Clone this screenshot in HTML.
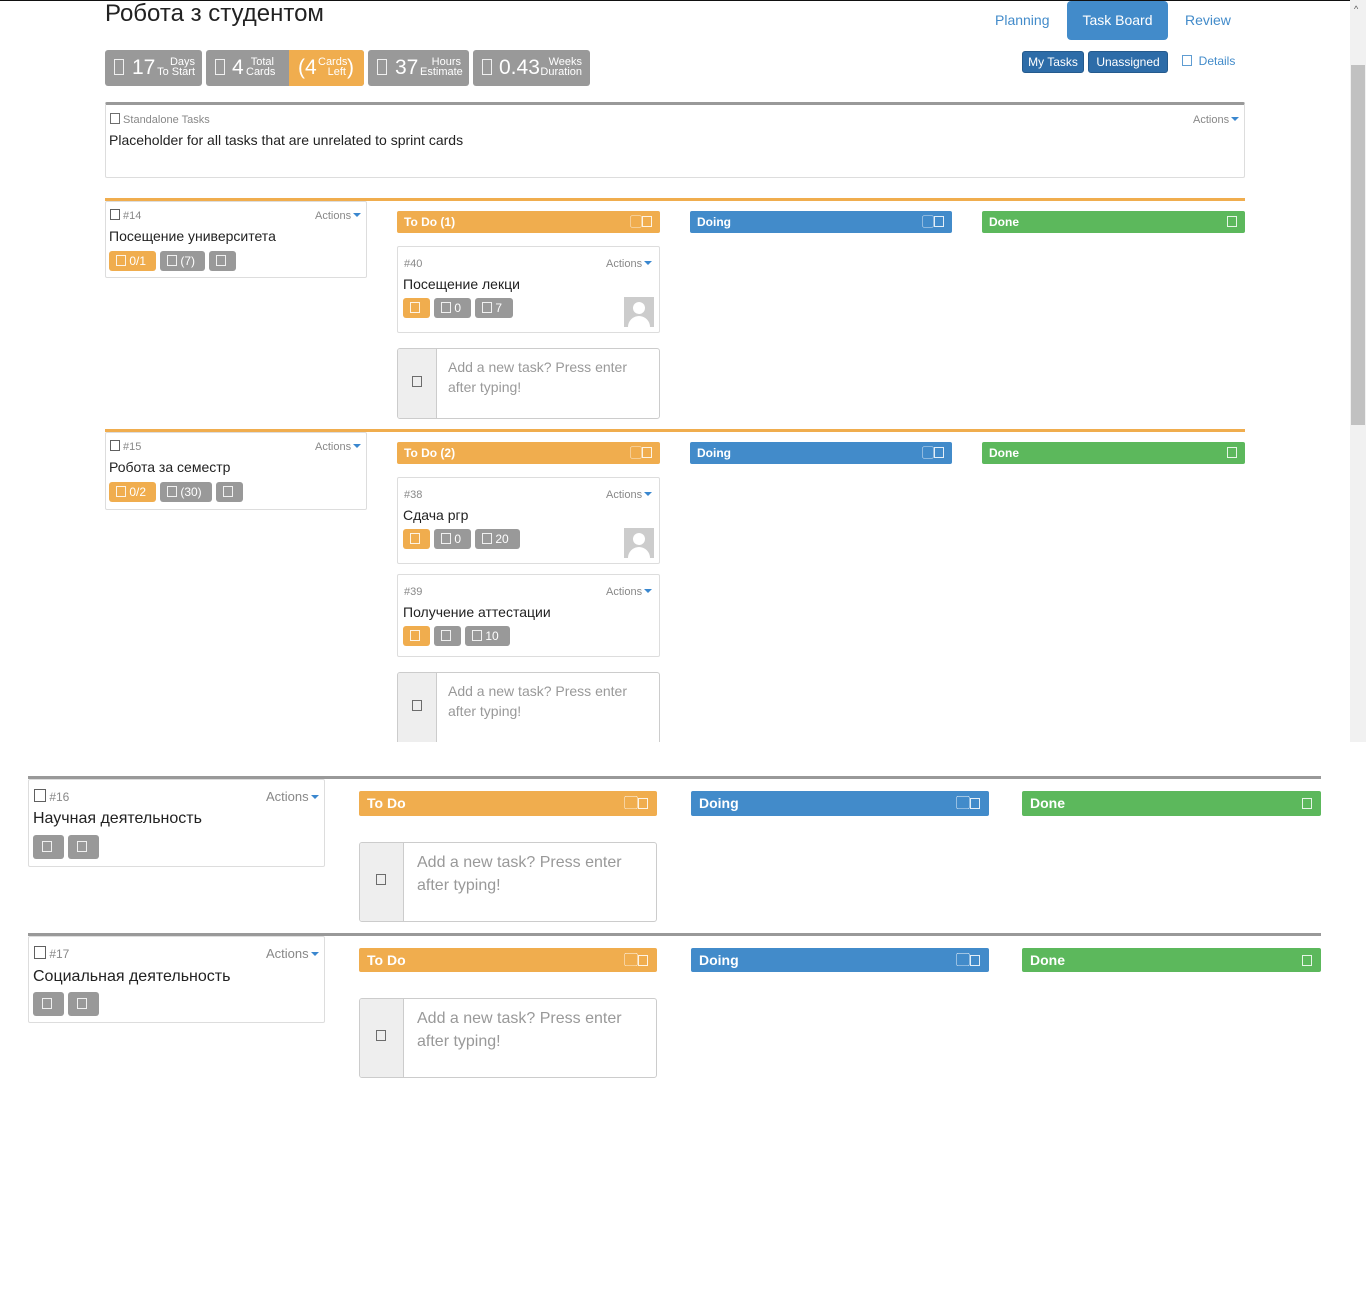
<!DOCTYPE html>
<html><head><meta charset="utf-8"><style>
*{box-sizing:border-box;margin:0;padding:0}
body{width:1366px;height:1289px;background:#fff;font-family:"Liberation Sans","Noto Sans CJK SC",sans-serif;color:#222;position:relative;overflow:hidden}
.a{position:absolute}
.ic{display:inline-block;width:10px;height:11px;border:1px solid currentColor;vertical-align:-1px;opacity:.85}
.stat{position:absolute;top:50px;height:36px;background:#999;color:#fff;border-radius:3px}
.big{position:absolute;top:6px;font-size:21px}
.sm{position:absolute;font-size:11px;line-height:10px;text-align:right}
.box{position:absolute;border:1px solid #ddd;background:#fff;border-radius:2px}
.hdr{position:absolute;color:#fff;font-weight:bold;border-radius:2px;font-size:12px;padding-left:7px}
.bdg{position:absolute;height:20px;border-radius:3px;color:#fff;font-size:12px;line-height:20px;padding-left:7px}
.o{background:#f0ad4e}.g{background:#999}
.act{position:absolute;color:#888;font-size:11px}
.act:after{content:"";display:inline-block;border:4px solid transparent;border-top:4px solid #3a87cf;border-bottom:0;margin-left:2px;vertical-align:2px}
.gray{color:#888;font-size:11px}
.add{position:absolute;border:1px solid #ccc;border-radius:3px;background:#fff;overflow:hidden}
.add .l{position:absolute;left:0;top:0;bottom:0;background:#eee;border-right:1px solid #ccc}
.add .t{position:absolute;color:#999}
.av{position:absolute;width:30px;height:30px;background:#ccc;overflow:hidden}
.av:before{content:"";position:absolute;left:9px;top:5px;width:12px;height:12px;border-radius:50%;background:#fff}
.av:after{content:"";position:absolute;left:4px;top:19px;width:22px;height:16px;border-radius:11px 11px 0 0;background:#fff}
</style></head><body>
<div class="a" style="left:0;top:0;width:1350px;height:1px;background:#111"></div>
<div class="a" style="left:105px;top:0;font-size:24px;color:#222">Робота з студентом</div>

<div class="stat" style="left:105px;width:97px"><span class="ic a" style="left:9px;top:9px;height:16px"></span><span class="big" style="left:27px">17</span><span class="sm" style="left:52px;top:7px;width:38px">Days<br>To Start</span></div>
<div class="stat" style="left:206px;width:158px;background:#999"><span class="ic a" style="left:9px;top:9px;height:16px"></span><span class="big" style="left:26px">4</span><span class="sm" style="left:40px;top:7px;width:28px">Total<br>Cards</span>
<div class="a" style="left:83px;top:0;width:75px;height:36px;background:#f0ad4e;border-radius:0 3px 3px 0"><span class="big" style="left:9px;top:6px">(4</span><span class="sm" style="left:29px;top:7px;width:28px">Cards<br>Left</span><span class="big" style="left:58px">)</span></div></div>
<div class="stat" style="left:368px;width:101px"><span class="ic a" style="left:9px;top:9px;height:16px"></span><span class="big" style="left:27px">37</span><span class="sm" style="left:52px;top:7px;width:41px">Hours<br>Estimate</span></div>
<div class="stat" style="left:473px;width:117px"><span class="ic a" style="left:9px;top:9px;height:16px"></span><span class="big" style="left:26px">0.43</span><span class="sm" style="left:67px;top:7px;width:42px">Weeks<br>Duration</span></div>

<div class="a" style="left:995px;top:12px;color:#428bca;font-size:14px">Planning</div>
<div class="a" style="left:1067px;top:1px;width:101px;height:39px;background:#428bca;border-radius:4px;color:#fff;font-size:14px;text-align:center;line-height:38px">Task Board</div>
<div class="a" style="left:1185px;top:12px;color:#428bca;font-size:14px">Review</div>
<div class="a" style="left:1022px;top:51px;width:62px;height:22px;background:#2d6ca8;border:1px solid #245a8d;border-radius:3px;color:#fff;font-size:12px;text-align:center;line-height:20px">My Tasks</div>
<div class="a" style="left:1088px;top:51px;width:80px;height:22px;background:#2d6ca8;border:1px solid #245a8d;border-radius:3px;color:#fff;font-size:12px;text-align:center;line-height:20px">Unassigned</div>
<div class="a" style="left:1182px;top:54px;color:#428bca;font-size:12px"><span class="ic"></span>&nbsp; Details</div>

<div class="box" style="left:105px;top:102px;width:1140px;height:76px;border-top:3px solid #999"></div>
<div class="a gray" style="left:110px;top:113px"><span class="ic" style="color:#555"></span> Standalone Tasks</div>
<div class="a" style="left:109px;top:132px;font-size:14px">Placeholder for all tasks that are unrelated to sprint cards</div>
<div class="act" style="left:1193px;top:114px">Actions</div>

<!-- row 1 -->
<div class="a" style="left:105px;top:198px;width:1140px;height:3px;background:#f0ad4e"></div>
<div class="box" style="left:105px;top:201px;width:262px;height:77px"></div>
<div class="a gray" style="left:110px;top:209px"><span class="ic" style="color:#444"></span> #14</div>
<div class="act" style="left:315px;top:210px">Actions</div>
<div class="a" style="left:109px;top:228px;font-size:14px">Посещение университета</div>
<div class="bdg o" style="left:109px;top:251px;width:47px"><span class="ic"></span> 0/1</div>
<div class="bdg g" style="left:160px;top:251px;width:45px"><span class="ic"></span> (7)</div>
<div class="bdg g" style="left:209px;top:251px;width:27px"><span class="ic"></span></div>

<div class="hdr o" style="left:397px;top:211px;width:263px;height:22px;line-height:22px">To Do (1)<span class="a" style="right:8px;top:0;font-weight:normal">▢<span class="ic"></span></span></div>
<div class="hdr" style="left:690px;top:211px;width:262px;height:22px;line-height:22px;background:#428bca">Doing<span class="a" style="right:8px;top:0;font-weight:normal">▢<span class="ic"></span></span></div>
<div class="hdr" style="left:982px;top:211px;width:263px;height:22px;line-height:22px;background:#5cb85c">Done<span class="a" style="right:8px;top:0"><span class="ic"></span></span></div>

<div class="box" style="left:397px;top:246px;width:263px;height:87px"></div>
<div class="a gray" style="left:404px;top:258px">#40</div>
<div class="act" style="left:606px;top:258px">Actions</div>
<div class="a" style="left:403px;top:276px;font-size:14px">Посещение лекци</div>
<div class="bdg o" style="left:403px;top:298px;width:27px"><span class="ic"></span></div>
<div class="bdg g" style="left:434px;top:298px;width:37px"><span class="ic"></span> 0</div>
<div class="bdg g" style="left:475px;top:298px;width:38px"><span class="ic"></span> 7</div>
<div class="av" style="left:624px;top:297px"></div>

<div class="add" style="left:397px;top:348px;width:263px;height:71px"><div class="l" style="width:39px"></div><span class="ic a" style="left:14px;top:27px;color:#555"></span><div class="t" style="left:50px;top:8px;font-size:14px;line-height:20px">Add a new task? Press enter<br>after typing!</div></div>

<!-- row 2 -->
<div class="a" style="left:105px;top:429px;width:1140px;height:3px;background:#f0ad4e"></div>
<div class="box" style="left:105px;top:432px;width:262px;height:78px"></div>
<div class="a gray" style="left:110px;top:440px"><span class="ic" style="color:#444"></span> #15</div>
<div class="act" style="left:315px;top:441px">Actions</div>
<div class="a" style="left:109px;top:459px;font-size:14px">Робота за семестр</div>
<div class="bdg o" style="left:109px;top:482px;width:47px"><span class="ic"></span> 0/2</div>
<div class="bdg g" style="left:160px;top:482px;width:52px"><span class="ic"></span> (30)</div>
<div class="bdg g" style="left:216px;top:482px;width:27px"><span class="ic"></span></div>

<div class="hdr o" style="left:397px;top:442px;width:263px;height:22px;line-height:22px">To Do (2)<span class="a" style="right:8px;top:0;font-weight:normal">▢<span class="ic"></span></span></div>
<div class="hdr" style="left:690px;top:442px;width:262px;height:22px;line-height:22px;background:#428bca">Doing<span class="a" style="right:8px;top:0;font-weight:normal">▢<span class="ic"></span></span></div>
<div class="hdr" style="left:982px;top:442px;width:263px;height:22px;line-height:22px;background:#5cb85c">Done<span class="a" style="right:8px;top:0"><span class="ic"></span></span></div>

<div class="box" style="left:397px;top:477px;width:263px;height:87px"></div>
<div class="a gray" style="left:404px;top:489px">#38</div>
<div class="act" style="left:606px;top:489px">Actions</div>
<div class="a" style="left:403px;top:507px;font-size:14px">Сдача ргр</div>
<div class="bdg o" style="left:403px;top:529px;width:27px"><span class="ic"></span></div>
<div class="bdg g" style="left:434px;top:529px;width:37px"><span class="ic"></span> 0</div>
<div class="bdg g" style="left:475px;top:529px;width:45px"><span class="ic"></span> 20</div>
<div class="av" style="left:624px;top:528px"></div>

<div class="box" style="left:397px;top:574px;width:263px;height:83px"></div>
<div class="a gray" style="left:404px;top:586px">#39</div>
<div class="act" style="left:606px;top:586px">Actions</div>
<div class="a" style="left:403px;top:604px;font-size:14px">Получение аттестации</div>
<div class="bdg o" style="left:403px;top:626px;width:27px"><span class="ic"></span></div>
<div class="bdg g" style="left:434px;top:626px;width:27px"><span class="ic"></span></div>
<div class="bdg g" style="left:465px;top:626px;width:45px"><span class="ic"></span> 10</div>

<div class="add" style="left:397px;top:672px;width:263px;height:80px;border-bottom:none"><div class="l" style="width:39px"></div><span class="ic a" style="left:14px;top:27px;color:#555"></span><div class="t" style="left:50px;top:8px;font-size:14px;line-height:20px">Add a new task? Press enter<br>after typing!</div></div>
<div class="a" style="left:0;top:742px;width:1366px;height:30px;background:#fff"></div>

<!-- scrollbar -->
<div class="a" style="left:1350px;top:0;width:16px;height:742px;background:#f1f1f1"></div>
<div class="a" style="left:1351px;top:65px;width:14px;height:360px;background:#c1c1c1"></div>
<div class="a" style="left:1354px;top:4px;font-size:9px;color:#555">^</div>

<!-- lower section -->
<div class="a" style="left:28px;top:776px;width:1293px;height:3px;background:#999"></div>
<div class="box" style="left:28px;top:779px;width:297px;height:88px"></div>
<div class="a" style="left:34px;top:789px;color:#888;font-size:12px"><span class="ic" style="color:#444;width:12px;height:13px"></span> #16</div>
<div class="act" style="left:266px;top:789px;font-size:13px">Actions</div>
<div class="a" style="left:33px;top:810px;font-size:16px">Научная деятельность</div>
<div class="bdg g" style="left:33px;top:835px;width:31px;height:24px;padding-left:9px;line-height:24px"><span class="ic"></span></div>
<div class="bdg g" style="left:68px;top:835px;width:31px;height:24px;padding-left:9px;line-height:24px"><span class="ic"></span></div>

<div class="hdr o" style="left:359px;top:791px;width:298px;height:25px;line-height:25px;font-size:14px;padding-left:8px">To Do<span class="a" style="right:9px;top:0;font-weight:normal">▢<span class="ic"></span></span></div>
<div class="hdr" style="left:691px;top:791px;width:298px;height:25px;line-height:25px;font-size:14px;padding-left:8px;background:#428bca">Doing<span class="a" style="right:9px;top:0;font-weight:normal">▢<span class="ic"></span></span></div>
<div class="hdr" style="left:1022px;top:791px;width:299px;height:25px;line-height:25px;font-size:14px;padding-left:8px;background:#5cb85c">Done<span class="a" style="right:9px;top:0"><span class="ic"></span></span></div>
<div class="add" style="left:359px;top:842px;width:298px;height:80px"><div class="l" style="width:44px"></div><span class="ic a" style="left:16px;top:31px;color:#555"></span><div class="t" style="left:57px;top:8px;font-size:16px;line-height:23px">Add a new task? Press enter<br>after typing!</div></div>

<div class="a" style="left:28px;top:933px;width:1293px;height:3px;background:#999"></div>
<div class="box" style="left:28px;top:936px;width:297px;height:87px"></div>
<div class="a" style="left:34px;top:946px;color:#888;font-size:12px"><span class="ic" style="color:#444;width:12px;height:13px"></span> #17</div>
<div class="act" style="left:266px;top:946px;font-size:13px">Actions</div>
<div class="a" style="left:33px;top:968px;font-size:16px">Социальная деятельность</div>
<div class="bdg g" style="left:33px;top:992px;width:31px;height:24px;padding-left:9px;line-height:24px"><span class="ic"></span></div>
<div class="bdg g" style="left:68px;top:992px;width:31px;height:24px;padding-left:9px;line-height:24px"><span class="ic"></span></div>

<div class="hdr o" style="left:359px;top:948px;width:298px;height:24px;line-height:24px;font-size:14px;padding-left:8px">To Do<span class="a" style="right:9px;top:0;font-weight:normal">▢<span class="ic"></span></span></div>
<div class="hdr" style="left:691px;top:948px;width:298px;height:24px;line-height:24px;font-size:14px;padding-left:8px;background:#428bca">Doing<span class="a" style="right:9px;top:0;font-weight:normal">▢<span class="ic"></span></span></div>
<div class="hdr" style="left:1022px;top:948px;width:299px;height:24px;line-height:24px;font-size:14px;padding-left:8px;background:#5cb85c">Done<span class="a" style="right:9px;top:0"><span class="ic"></span></span></div>
<div class="add" style="left:359px;top:998px;width:298px;height:80px"><div class="l" style="width:44px"></div><span class="ic a" style="left:16px;top:31px;color:#555"></span><div class="t" style="left:57px;top:8px;font-size:16px;line-height:23px">Add a new task? Press enter<br>after typing!</div></div>
</body></html>
